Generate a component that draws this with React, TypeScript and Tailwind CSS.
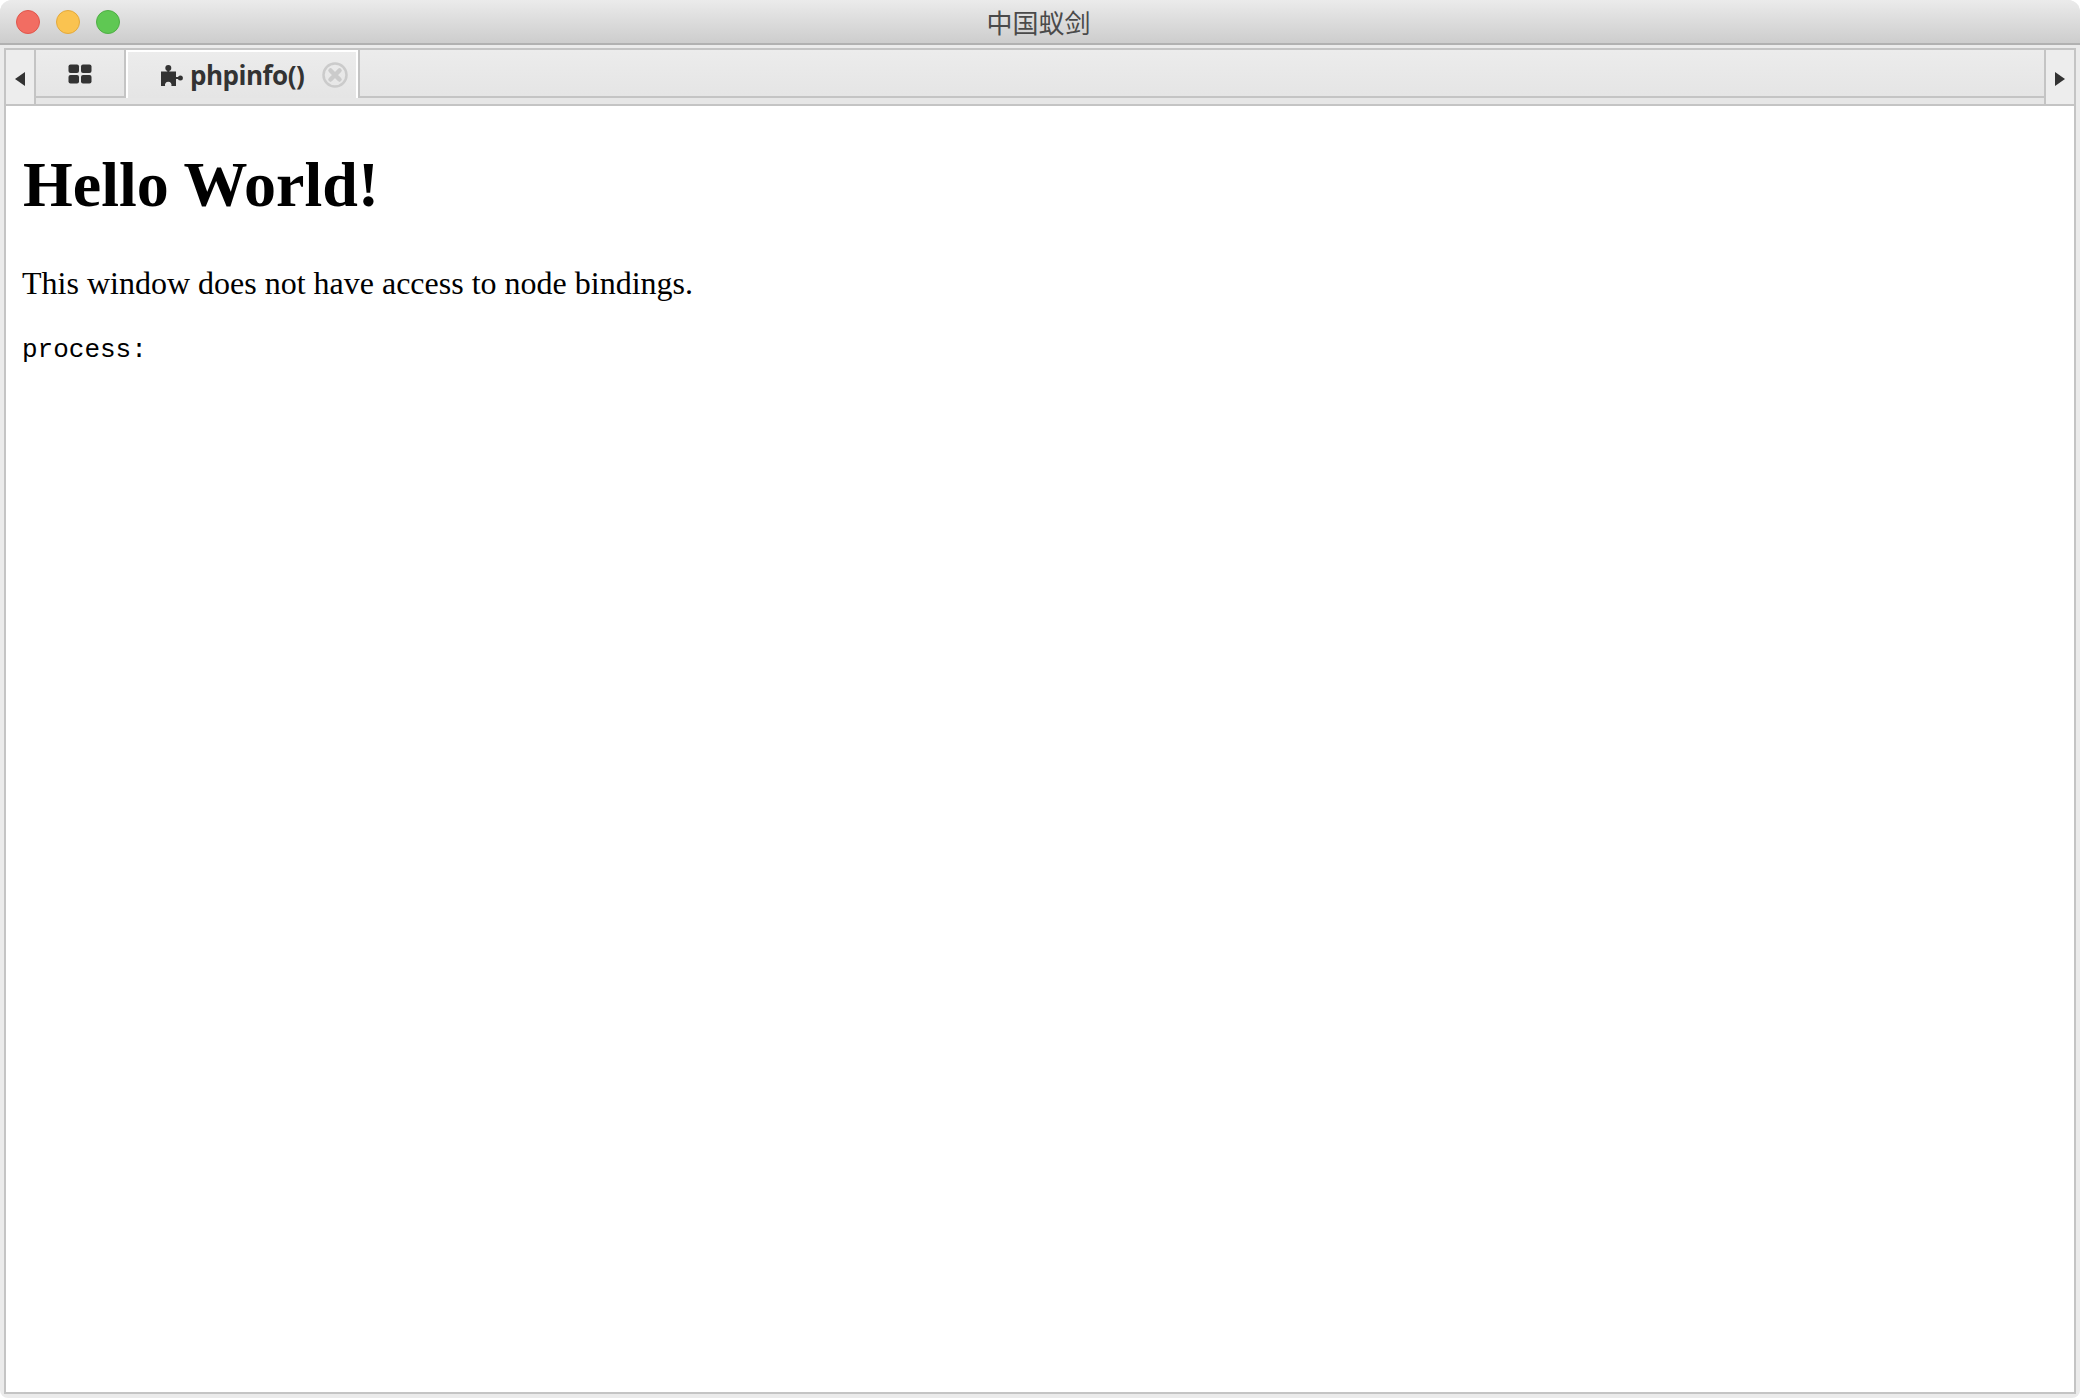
import React from "react";

function GridIcon() {
    return (
        <svg width="24" height="20" viewBox="0 0 24 20" fill="#333333">
            <rect x="0.5" y="0.5" width="10.5" height="8.5" rx="2" />
            <rect x="13" y="0.5" width="10.5" height="8.5" rx="2" />
            <rect x="0.5" y="11" width="10.5" height="8.5" rx="2" />
            <rect x="13" y="11" width="10.5" height="8.5" rx="2" />
        </svg>
    );
}

function PuzzleIcon() {
    return (
        <svg width="22" height="21" viewBox="0 0 22 21" fill="#333333">
            <path d="M0 6.500H15V21H10.400a3.300 3.300 0 1 0-6.300 0H0z" />
            <circle cx="7.300" cy="3" r="3" />
            <rect x="6.300" y="4" width="2" height="3" />
            <rect x="15" y="12" width="4" height="2" />
            <circle cx="19.400" cy="13" r="2.500" />
        </svg>
    );
}

function CloseIcon() {
    return (
        <svg width="26" height="26" viewBox="0 0 26 26" fill="none">
            <circle cx="13" cy="13" r="11.500" stroke="#cbcbcb" strokeWidth="2.500" />
            <path d="M8.500 8.500l9 9M17.500 8.500l-9 9" stroke="#cbcbcb" strokeWidth="4.500" strokeLinecap="round" />
        </svg>
    );
}

export default function App() {
    return (
        <div className="w-[2080px] h-[1398px] flex flex-col bg-[#ebebeb] overflow-hidden rounded-t-xl rounded-b-lg">
            {/* title bar */}
            <div className="h-[45px] shrink-0 grid grid-cols-[1fr_auto_1fr] items-center pl-4 pr-[19px] pt-[1px] bg-gradient-to-b from-[#ebebeb] to-[#cdcdcd] border-b-2 border-[#b1b1b1]">
                <div className="flex gap-4">
                    <span className="w-6 h-6 rounded-full bg-[#f26d62] border border-[#e0564c]" />
                    <span className="w-6 h-6 rounded-full bg-[#fac350] border border-[#e3a93c]" />
                    <span className="w-6 h-6 rounded-full bg-[#5fc853] border border-[#4fae45]" />
                </div>
                <div className="text-[26px] leading-none text-[#4a4a4a] font-['Noto_Sans_CJK_SC',sans-serif]">中国蚁剑</div>
                <div />
            </div>

            <div className="flex-1 flex flex-col mt-[3px] mx-1 mb-1 min-h-0">
                {/* tab strip */}
                <div className="h-[58px] shrink-0 flex border-2 border-[#c4c4c4]">
                    <button className="w-[28px] shrink-0 flex items-center justify-center pt-[4px] bg-[#ededed]">
                        <span className="w-0 h-0 border-y-[7px] border-y-transparent border-r-[10px] border-r-[#333333]" />
                    </button>
                    <div className="flex-1 min-w-0 flex items-stretch border-x-2 border-[#c4c4c4] pb-[6px] bg-[#e6e6e6]">
                        <div className="w-full flex bg-gradient-to-b from-[#ececec] to-[#e5e5e5] border-b-2 border-[#c4c4c4]">
                            <div className="w-[90px] shrink-0 flex items-center justify-center border-r-2 border-[#c4c4c4] pt-[1px]">
                                <GridIcon />
                            </div>
                            <div className="w-[232px] shrink-0 flex items-center -mb-[2px] pl-[33px] border-x-2 border-x-white border-t-2 border-t-white bg-gradient-to-b from-[#ececec] to-[#e5e5e5]">
                                <PuzzleIcon />
                                <span className="ml-[7px] text-[26px] leading-none font-bold text-[#333333] tracking-[-0.5px] font-['Open_Sans',sans-serif]">phpinfo()</span>
                                <span className="ml-[18px] flex"><CloseIcon /></span>
                            </div>
                            <div className="flex-1 border-l-2 border-[#c4c4c4]" />
                        </div>
                    </div>
                    <button className="w-[28px] shrink-0 flex items-center justify-center pt-[4px] bg-[#ededed]">
                        <span className="w-0 h-0 border-y-[7px] border-y-transparent border-l-[10px] border-l-[#333333]" />
                    </button>
                </div>

                {/* page content */}
                <div className="flex-1 min-h-0 bg-white border-2 border-t-0 border-[#c4c4c4] pt-[1px] pl-[17px] text-black font-['Liberation_Serif',serif]">
                    <h1 className="mt-[41px] text-[64px] leading-[74px] font-bold">Hello World!</h1>
                    <p className="mt-[43px] -ml-[1px] text-[32px] leading-[37px]">This window does not have access to node bindings.</p>
                    <pre className="mt-[33px] -ml-[1px] text-[26px] leading-[30px] font-['Liberation_Mono',monospace]">process:</pre>
                </div>
            </div>
        </div>
    );
}
